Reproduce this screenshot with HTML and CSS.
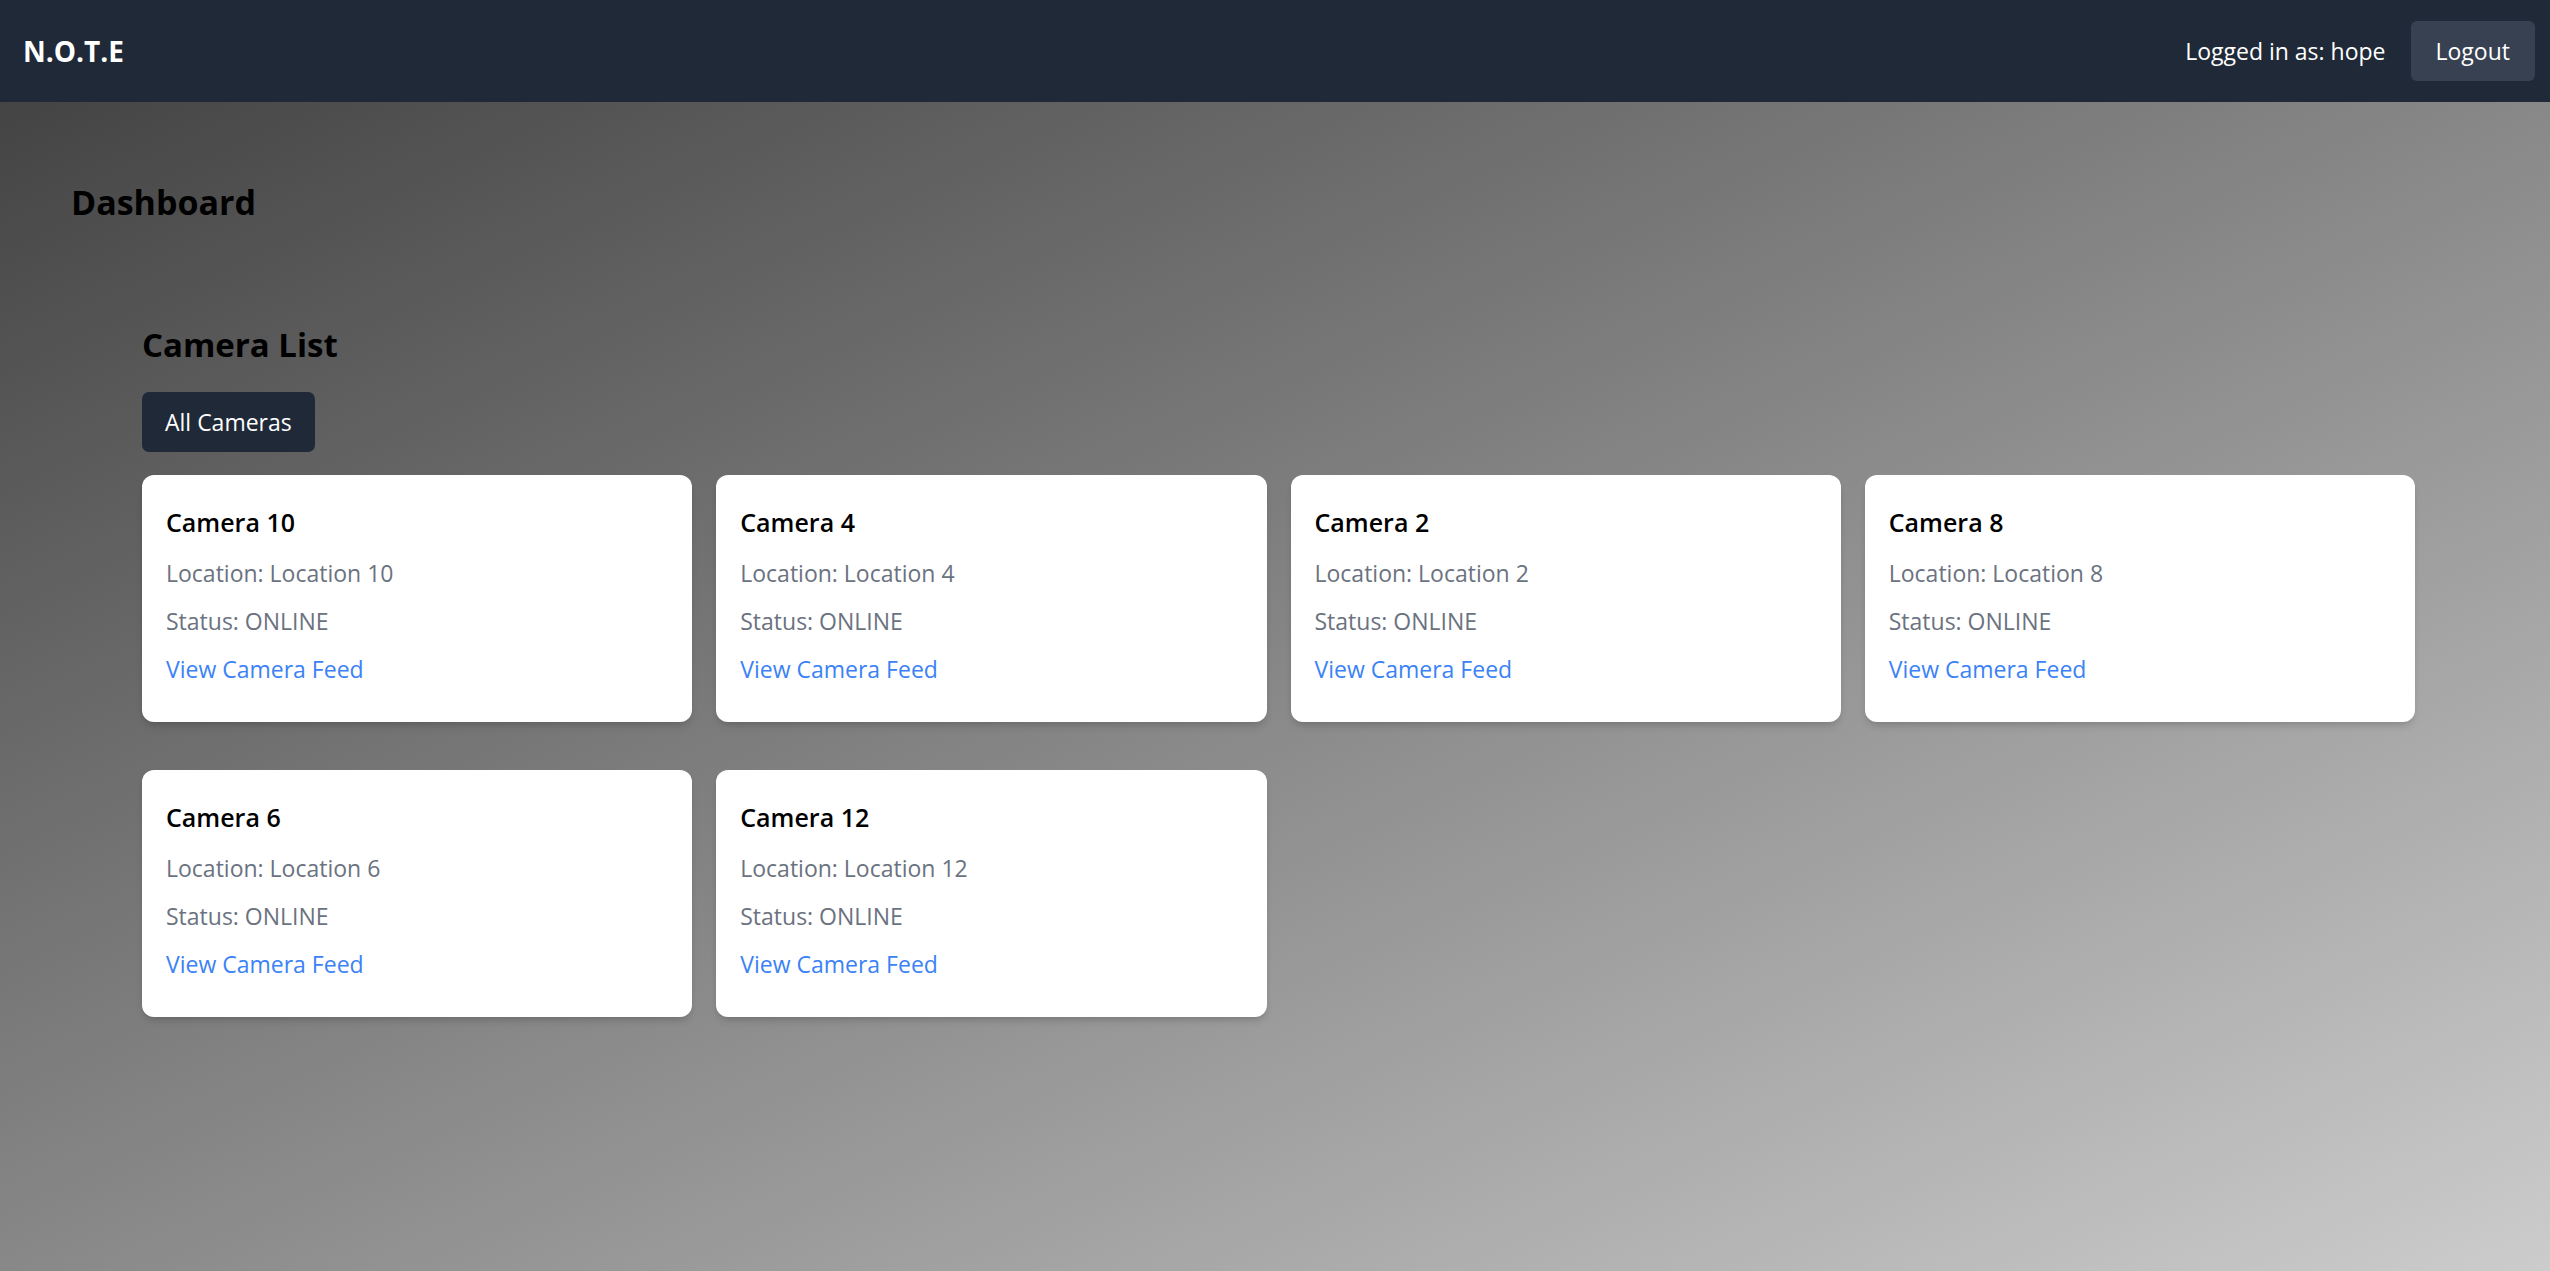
FILE: index.html
```html
<!DOCTYPE html>
<html lang="en">
<head>
<meta charset="utf-8">
<title>N.O.T.E</title>
<link rel="stylesheet" href="styles.css">
</head>
<body>
<header class="topbar">
  <div class="logo">N.O.T.E</div>
  <div class="user">
    <span class="user-label">Logged in as: hope</span>
    <button class="logout">Logout</button>
  </div>
</header>
<main class="main">
  <h1 class="page-title">Dashboard</h1>
  <section class="camera-section">
    <h2 class="section-title">Camera List</h2>
    <button class="filter-btn">All Cameras</button>
    <div class="camera-grid">
      <div class="card">
        <h3 class="card-title">Camera 10</h3>
        <p class="card-text">Location: Location 10</p>
        <p class="card-text">Status: ONLINE</p>
        <p class="card-link-row"><a class="card-link" href="#">View Camera Feed</a></p>
      </div>
      <div class="card">
        <h3 class="card-title">Camera 4</h3>
        <p class="card-text">Location: Location 4</p>
        <p class="card-text">Status: ONLINE</p>
        <p class="card-link-row"><a class="card-link" href="#">View Camera Feed</a></p>
      </div>
      <div class="card">
        <h3 class="card-title">Camera 2</h3>
        <p class="card-text">Location: Location 2</p>
        <p class="card-text">Status: ONLINE</p>
        <p class="card-link-row"><a class="card-link" href="#">View Camera Feed</a></p>
      </div>
      <div class="card">
        <h3 class="card-title">Camera 8</h3>
        <p class="card-text">Location: Location 8</p>
        <p class="card-text">Status: ONLINE</p>
        <p class="card-link-row"><a class="card-link" href="#">View Camera Feed</a></p>
      </div>
      <div class="card">
        <h3 class="card-title">Camera 6</h3>
        <p class="card-text">Location: Location 6</p>
        <p class="card-text">Status: ONLINE</p>
        <p class="card-link-row"><a class="card-link" href="#">View Camera Feed</a></p>
      </div>
      <div class="card">
        <h3 class="card-title">Camera 12</h3>
        <p class="card-text">Location: Location 12</p>
        <p class="card-text">Status: ONLINE</p>
        <p class="card-link-row"><a class="card-link" href="#">View Camera Feed</a></p>
      </div>
    </div>
  </section>
</main>
</body>
</html>
```
FILE: styles.css
```css
* { box-sizing: border-box; }
html, body { margin: 0; padding: 0; }
body {
  font-family: "Open Sans", "Noto Sans", sans-serif;
  color: #000;
  min-height: 100vh;
  display: flex;
  flex-direction: column;
}
.topbar {
  height: 102px;
  flex: 0 0 102px;
  background: #1f2937;
  display: flex;
  align-items: center;
  justify-content: space-between;
  padding: 0 15px 0 23px;
}
.logo {
  color: #fff;
  font-size: 28px;
  font-weight: 700;
  line-height: 42px;
}
.user { display: flex; align-items: center; }
.user-label { color: #fff; font-size: 23px; line-height: 36px; }
.logout {
  margin-left: 25px;
  background: #374151;
  color: #fff;
  border: 0;
  border-radius: 6px;
  font-family: inherit;
  font-size: 23px;
  line-height: 36px;
  padding: 12px 25px;
  height: 60px;
}
.main {
  flex: 1;
  background: linear-gradient(to bottom right, #444444, #cccccc);
  padding: 76px 64px 72px 71px;
}
.page-title {
  margin: 0;
  font-size: 34px;
  line-height: 48px;
  font-weight: 700;
}
.camera-section {
  margin-top: 95px;
  padding: 0 71px;
}
.section-title {
  margin: 0 0 23px;
  font-size: 33px;
  line-height: 48px;
  font-weight: 700;
}
.filter-btn {
  display: block;
  background: #1f2937;
  color: #fff;
  border: 0;
  border-radius: 7px;
  font-family: inherit;
  font-size: 23px;
  line-height: 36px;
  height: 60px;
  padding: 12px 23px;
}
.camera-grid {
  margin-top: 23px;
  display: grid;
  grid-template-columns: repeat(4, 1fr);
  column-gap: 24px;
  row-gap: 48px;
}
.card {
  background: #fff;
  border-radius: 12px;
  padding: 27px 24px 23px;
  box-shadow: 0 6px 9px -2px rgba(0,0,0,0.12), 0 3px 6px -3px rgba(0,0,0,0.12);
}
.card-title {
  margin: 0 0 12px;
  font-size: 25px;
  line-height: 41px;
  font-weight: 600;
}
.card-text, .card-link-row {
  margin: 0 0 12px;
  font-size: 23px;
  line-height: 36px;
  color: #6b7280;
}
.card-link { color: #3b82f6; text-decoration: none; }
```
